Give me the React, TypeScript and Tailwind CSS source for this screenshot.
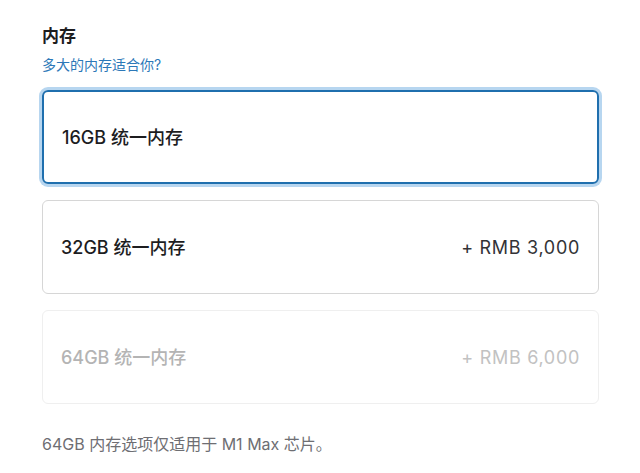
import React, { useState } from "react";

const options = [
  { id: "16", label: "16GB 统一内存", price: "", disabled: false },
  { id: "32", label: "32GB 统一内存", price: "+ RMB 3,000", disabled: false },
  { id: "64", label: "64GB 统一内存", price: "+ RMB 6,000", disabled: true },
];

const font = {
  fontFamily: '"Inter", "Noto Sans CJK SC", "Noto Sans", sans-serif',
};

export default function App() {
  const [selected, setSelected] = useState("16");

  return (
    <div className="w-[640px] h-[473px] bg-white overflow-hidden" style={font}>
      <div className="pl-[42px] pr-[41px] pt-[25px]">
        <h2 className="text-[17px] font-semibold leading-[22px] text-[#1d1d1f]">内存</h2>
        <a href="#" className="block mt-[8px] text-[14px] leading-[19px] text-[#2c78b8]">
          多大的内存适合你?
        </a>

        <div className="mt-[16px] flex flex-col gap-[16px]">
          {options.map((o) => {
            const isSel = selected === o.id;
            return (
              <button
                key={o.id}
                disabled={o.disabled}
                onClick={() => setSelected(o.id)}
                className={
                  "h-[94px] w-full rounded-[6px] px-[18px] flex items-center justify-between text-left " +
                  (isSel
                    ? "border-2 border-[#1f6fae] shadow-[0_0_0_3px_#b7d6f0]"
                    : o.disabled
                    ? "border border-[#efefef]"
                    : "border border-[#d6d6d6]")
                }
              >
                <span
                  className={
                    "text-[18px] font-medium " +
                    (o.disabled ? "text-[#b4b4b4]" : "text-[#1d1d1f]")
                  }
                >
                  {o.label}
                </span>
                {o.price && (
                  <span
                    className={
                      "text-[18px] tracking-[0.7px] " +
                      (o.disabled ? "text-[#c2c2c2]" : "text-[#333336]")
                    }
                  >
                    {o.price}
                  </span>
                )}
              </button>
            );
          })}
        </div>

        <p className="mt-[29px] text-[16px] leading-[22px] text-[#6e6e73]">
          64GB 内存选项仅适用于 M1 Max 芯片。
        </p>
      </div>
    </div>
  );
}
